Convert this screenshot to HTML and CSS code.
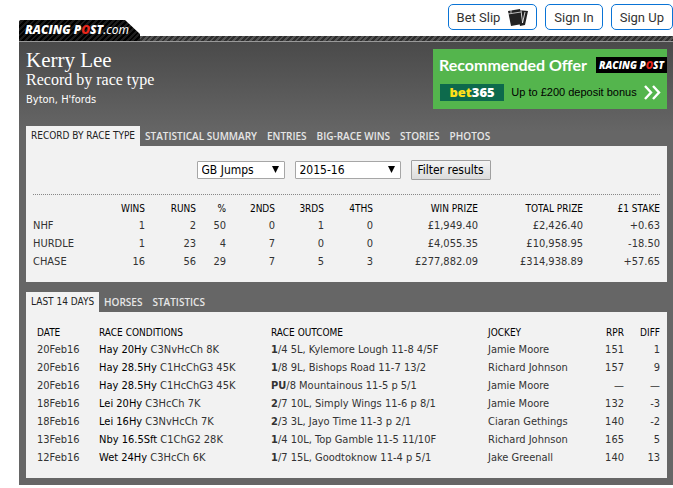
FILE: index.html
```html
<!DOCTYPE html>
<html lang="en">
  <head>
    <meta charset="UTF-8" />
    <meta name="viewport" content="width=device-width, initial-scale=1.0" />
    <title>Kerry Lee | Record by race type</title>
    <link rel="stylesheet" href="styles.css">
  </head>
  <body>
    <header class="site-header">
      <a class="logo" href="#"><b>RACING P<span class="red">O</span>ST</b>.com</a>
      <nav class="account">
        <a class="account-link" href="#">Bet Slip
          <svg class="slip-icon" width="20" height="19" viewBox="0 0 20 19">
            <path d="M9 2L20 3L17 17L12 18Z" fill="#222" />
            <path d="M13 2.5L14.5 15L17 4" stroke="#fff" stroke-width="0.8" fill="none" />
            <path d="M0 3L12 1L14 16L3 18Z" fill="#222" />
            <path d="M0 6L13 4M3 2V5" stroke="#fff" stroke-width="0.7" fill="none" />
          </svg>
        </a>
        <a class="account-link" href="#">Sign In</a>
        <a class="account-link" href="#">Sign Up</a>
      </nav>
    </header>

    <main class="page">
      <div class="intro">
        <div class="trainer">
          <h1>Kerry Lee</h1>
          <h2>Record by race type</h2>
          <p>Byton, H'fords</p>
        </div>
        <a class="promo" href="#">
          <span class="promo-row">
            <span class="promo-title">Recommended Offer</span>
            <b class="promo-logo">RACING P<span class="red">O</span>ST</b>
          </span>
          <span class="promo-row">
            <b class="bookmaker"><span class="yellow">bet</span>365</b>
            <span class="promo-text">Up to £200 deposit bonus</span>
            <svg class="chevrons" width="17" height="15" viewBox="0 0 17 15">
              <path d="M1 1L7 7.5L1 14M9 1L15 7.5L9 14" fill="none" stroke="#fff" stroke-width="2.4" />
            </svg>
          </span>
        </a>
      </div>

      <!-- Record by race type -->
      <nav class="tabs">
        <a class="tab active" href="#">RECORD BY RACE TYPE</a>
        <a class="tab" href="#">STATISTICAL SUMMARY</a>
        <a class="tab" href="#">ENTRIES</a>
        <a class="tab" href="#">BIG-RACE WINS</a>
        <a class="tab" href="#">STORIES</a>
        <a class="tab" href="#">PHOTOS</a>
      </nav>
      <section class="panel">
        <form class="filter">
          <span class="select type-select">
            <select aria-label="Race type">
              <option>GB Jumps</option>
            </select>
            <svg class="arrow" width="7" height="7" viewBox="0 0 7 7"><path d="M0 0H7L3.5 7Z" /></svg>
          </span>
          <span class="select season-select">
            <select aria-label="Season">
              <option>2015-16</option>
            </select>
            <svg class="arrow" width="7" height="7" viewBox="0 0 7 7"><path d="M0 0H7L3.5 7Z" /></svg>
          </span>
          <button type="button">Filter results</button>
        </form>
        <table class="record">
          <colgroup>
            <col>
            <col class="col-wins">
            <col class="col-runs">
            <col class="col-percent">
            <col class="col-place">
            <col class="col-place">
            <col class="col-place">
            <col class="col-prize">
            <col class="col-prize">
            <col class="col-stake">
          </colgroup>
          <thead>
            <tr><th></th><th>WINS</th><th>RUNS</th><th>%</th><th>2NDS</th><th>3RDS</th><th>4THS</th><th>WIN PRIZE</th><th>TOTAL PRIZE</th><th>£1 STAKE</th></tr>
          </thead>
          <tbody>
            <tr><td>NHF</td><td>1</td><td>2</td><td>50</td><td>0</td><td>1</td><td>0</td><td>£1,949.40</td><td>£2,426.40</td><td>+0.63</td></tr>
            <tr><td>HURDLE</td><td>1</td><td>23</td><td>4</td><td>7</td><td>0</td><td>0</td><td>£4,055.35</td><td>£10,958.95</td><td>-18.50</td></tr>
            <tr><td>CHASE</td><td>16</td><td>56</td><td>29</td><td>7</td><td>5</td><td>3</td><td>£277,882.09</td><td>£314,938.89</td><td>+57.65</td></tr>
          </tbody>
        </table>
      </section>

      <!-- Last 14 days -->
      <nav class="tabs">
        <a class="tab active" href="#">LAST 14 DAYS</a>
        <a class="tab" href="#">HORSES</a>
        <a class="tab" href="#">STATISTICS</a>
      </nav>
      <section class="panel">
        <table class="results">
          <colgroup>
            <col class="col-date">
            <col class="col-conditions">
            <col>
            <col class="col-jockey">
            <col class="col-rating">
            <col class="col-rating">
          </colgroup>
          <thead>
            <tr><th>DATE</th><th>RACE CONDITIONS</th><th>RACE OUTCOME</th><th>JOCKEY</th><th>RPR</th><th>DIFF</th></tr>
          </thead>
          <tbody>
            <tr><td>20Feb16</td><td><a href="#">Hay 20Hy</a> C3NvHcCh 8K</td><td><b>1</b>/4 5L, Kylemore Lough 11-8 4/5F</td><td>Jamie Moore</td><td>151</td><td>1</td></tr>
            <tr><td>20Feb16</td><td><a href="#">Hay 28.5Hy</a> C1HcChG3 45K</td><td><b>1</b>/8 9L, Bishops Road 11-7 13/2</td><td>Richard Johnson</td><td>157</td><td>9</td></tr>
            <tr><td>20Feb16</td><td><a href="#">Hay 28.5Hy</a> C1HcChG3 45K</td><td><b>PU</b>/8 Mountainous 11-5 p 5/1</td><td>Jamie Moore</td><td>—</td><td>—</td></tr>
            <tr><td>18Feb16</td><td><a href="#">Lei 20Hy</a> C3HcCh 7K</td><td><b>2</b>/7 10L, Simply Wings 11-6 p 8/1</td><td>Jamie Moore</td><td>132</td><td>-3</td></tr>
            <tr><td>18Feb16</td><td><a href="#">Lei 16Hy</a> C3NvHcCh 7K</td><td><b>2</b>/3 3L, Jayo Time 11-3 p 2/1</td><td>Ciaran Gethings</td><td>140</td><td>-2</td></tr>
            <tr><td>13Feb16</td><td><a href="#">Nby 16.5Sft</a> C1ChG2 28K</td><td><b>1</b>/4 10L, Top Gamble 11-5 11/10F</td><td>Richard Johnson</td><td>165</td><td>5</td></tr>
            <tr><td>12Feb16</td><td><a href="#">Wet 24Hy</a> C3HcCh 6K</td><td><b>1</b>/7 15L, Goodtoknow 11-4 p 5/1</td><td>Jake Greenall</td><td>140</td><td>13</td></tr>
          </tbody>
        </table>
      </section>
    </main>
  </body>
</html>
```
FILE: styles.css
```css
* {
  margin: 0;
  padding: 0;
  box-sizing: border-box;
}

body {
  padding-left: 19px;
  background: #fff;
  font-family: Tahoma, "DejaVu Sans Condensed", sans-serif;
  font-size: 11px;
  color: #333;
}

a {
  color: inherit;
  text-decoration: none;
}

.site-header {
  display: flex;
  justify-content: space-between;
  align-items: flex-end;
  height: 41px;
  /* striped bar under the header */
  background: repeating-linear-gradient(135deg, #2e2e2e 0 2px, #555 2px 4px)
    bottom / 100% 5px no-repeat;
}

.logo {
  width: 121px;
  height: 21px;
  padding-left: 6px;
  border-radius: 2px 0 0 0;
  background: repeating-linear-gradient(135deg, #000 0 2px, #1c1c1c 2px 4px);
  clip-path: polygon(0 0, 106px 0, 100% 14px, 100% 100%, 0 100%);
  color: #fff;
  font: italic 12px/19px "Noto Sans", sans-serif;
  white-space: nowrap;
}

.logo b,
.promo-logo {
  font-family: "Open Sans", sans-serif;
  font-weight: 800;
}

.red {
  color: #e8271c;
}

.account {
  display: flex;
  gap: 8px;
  align-self: flex-start;
  padding-top: 4px;
}

.account-link {
  display: flex;
  align-items: center;
  gap: 8px;
  height: 26px;
  padding: 0 8px;
  border: 1px solid #0a74d6;
  border-radius: 5px;
  background: #fff;
  color: #333;
  font-family: Roboto, sans-serif;
  font-size: 13px;
  white-space: nowrap;
}

.page {
  padding: 7px 6px 7px 7px;
  border-top: 1px solid #999;
  background: linear-gradient(#4a4a4a, #666 90px);
}

.intro {
  display: flex;
  justify-content: space-between;
  height: 77px;
}

.trainer {
  color: #fff;
}

h1,
h2 {
  font-family: Georgia, "Liberation Serif", serif;
  font-weight: normal;
}

h1 {
  font-size: 21px;
  line-height: 22px;
}

h2 {
  font-size: 16px;
  line-height: 18px;
}

.trainer p {
  line-height: 22px;
}

.promo {
  display: flex;
  flex-direction: column;
  justify-content: space-between;
  width: 234px;
  height: 60px;
  padding: 7px 0 8px 6px;
  background: #54b54d;
}

.promo-row {
  display: flex;
  justify-content: space-between;
  align-items: center;
  height: 18px;
  white-space: nowrap;
}

.promo-title {
  color: #fff;
  font: bold 16px/18px Lato, sans-serif;
}

.promo-logo {
  width: 71px;
  background: #000;
  color: #fff;
  font-size: 10px;
  font-style: italic;
  line-height: 16px;
  text-align: center;
}

.bookmaker {
  width: 64px;
  margin-left: 1px;
  background: #0d6a4c;
  color: #fff;
  font: 800 13px/17px "Open Sans", sans-serif;
  text-align: center;
}

.yellow {
  color: #ffe01a;
}

.promo-text {
  color: #000;
  font: 11px/17px "Liberation Sans", sans-serif;
}

.chevrons {
  margin-right: 6px;
}

.tabs {
  display: flex;
}

.tab {
  padding: 0 5px;
  color: #e6e6e6;
  font-family: "Open Sans", sans-serif;
  font-size: 10px;
  font-weight: 600;
  line-height: 20px;
  white-space: nowrap;
}

.tab.active {
  background: #f2f2f2;
  color: #222;
  font-family: inherit;
  font-weight: normal;
}

.panel {
  padding: 12px 7px 11px;
  background: #f2f2f2;
}

.panel + .tabs {
  margin-top: 10px;
}

.filter {
  display: flex;
  justify-content: center;
  align-items: center;
  gap: 10px;
  height: 37px;
  padding: 0 6px 12px 0;
  border-bottom: 1px dotted #888;
  font-size: 12px;
}

.select {
  position: relative;
}

.type-select {
  width: 88px;
}

.season-select {
  width: 106px;
}

.select select {
  display: block;
  width: 100%;
  height: 18px;
  padding: 0 4px;
  border: 1px solid #a6a6a6;
  border-radius: 1px;
  appearance: none;
  background: #fff;
  color: #000;
  font: inherit;
}

.arrow {
  position: absolute;
  top: 5px;
  right: 6px;
  pointer-events: none;
}

.filter button {
  width: 80px;
  height: 20px;
  border: 1px solid #a0a0a0;
  border-radius: 1px;
  background: linear-gradient(#f4f4f4, #dcdcdc);
  color: #000;
  font: inherit;
  white-space: nowrap;
}

table {
  width: 100%;
  border-collapse: collapse;
  table-layout: fixed;
}

th,
td {
  height: 18px;
  line-height: 18px;
  white-space: nowrap;
}

th {
  height: 16px;
  color: #000;
  font-size: 10px;
  font-weight: normal;
  line-height: 16px;
}

.record {
  margin-top: 6px;
  text-align: right;
}

.record td:first-child {
  text-align: left;
}

.col-wins {
  width: 44px;
}

.col-runs {
  width: 51px;
}

.col-percent {
  width: 30px;
}

.col-place {
  width: 49px;
}

.col-prize {
  width: 105px;
}

.col-stake {
  width: 77px;
}

.results {
  margin-top: 1px;
}

.results th,
.results td {
  padding-left: 4px;
  text-align: left;
}

.results th:nth-child(n + 5),
.results td:nth-child(n + 5) {
  text-align: right;
}

.results a {
  color: #000;
}

.col-date {
  width: 62px;
}

.col-conditions {
  width: 172px;
}

.col-jockey {
  width: 104px;
}

.col-rating {
  width: 36px;
}
```
